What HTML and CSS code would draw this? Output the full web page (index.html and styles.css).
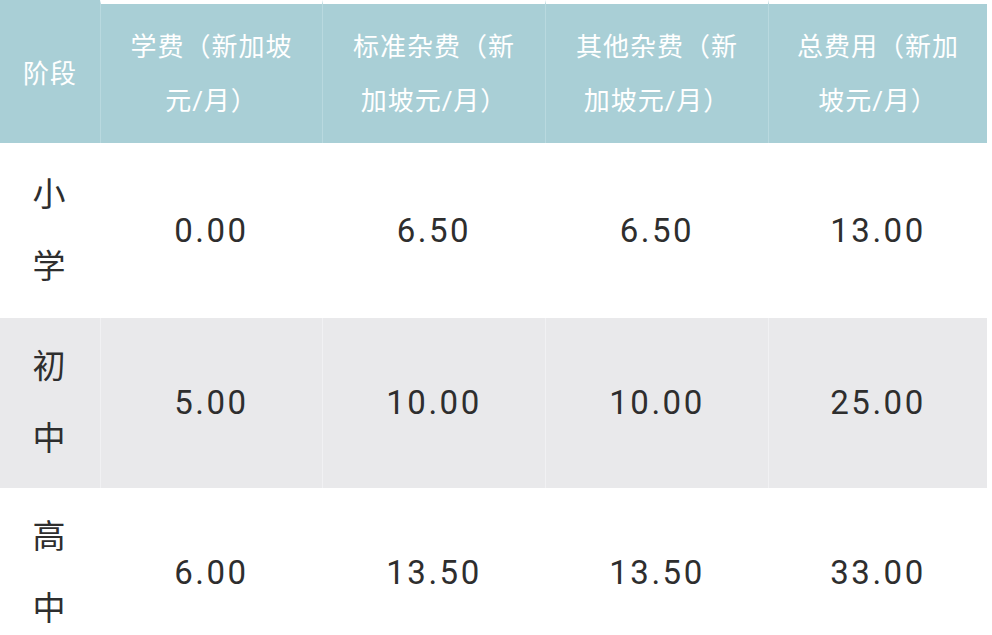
FILE: index.html
```html
<!DOCTYPE html>
<html lang="zh-CN">
<head>
<meta charset="utf-8">
<title>学费</title>
<link rel="stylesheet" href="styles.css">
</head>
<body>
<table class="fees">
  <colgroup>
    <col class="c-stage">
    <col class="c-a">
    <col class="c-b">
    <col class="c-c">
    <col class="c-d">
  </colgroup>
  <thead>
    <tr>
      <th class="stage-h">阶段</th>
      <th>学费（新加坡元/月）</th>
      <th>标准杂费（新加坡元/月）</th>
      <th>其他杂费（新加坡元/月）</th>
      <th>总费用（新加坡元/月）</th>
    </tr>
  </thead>
  <tbody>
    <tr class="first">
      <td class="stage">小学</td>
      <td>0.00</td>
      <td>6.50</td>
      <td>6.50</td>
      <td>13.00</td>
    </tr>
    <tr class="alt">
      <td class="stage">初中</td>
      <td>5.00</td>
      <td>10.00</td>
      <td>10.00</td>
      <td>25.00</td>
    </tr>
    <tr>
      <td class="stage">高中</td>
      <td>6.00</td>
      <td>13.50</td>
      <td>13.50</td>
      <td>33.00</td>
    </tr>
  </tbody>
</table>
</body>
</html>
```
FILE: styles.css
```css
html, body {
  margin: 0;
  padding: 0;
  background: #ffffff;
}

body {
  font-family: Roboto, "Noto Sans CJK SC", "Noto Sans", sans-serif;
  color: #333333;
}

.fees {
  width: 987px;
  table-layout: fixed;
  border-collapse: separate;
  border-spacing: 0;
}

.c-stage { width: 100px; }
.c-a { width: 222px; }
.c-b { width: 223px; }
.c-c { width: 223px; }
.c-d { width: 219px; }

.fees th {
  background: #a9cfd6;
  color: #ffffff;
  font-weight: 400;
  font-size: 26px;
  line-height: 54px;
  letter-spacing: 1px;
  padding: 16px 20px 15px;
  text-align: center;
  vertical-align: middle;
  border-left: 1px solid #b9d9df;
  border-top: 4px solid #ffffff;
}

.fees th.stage-h {
  border-left: none;
  border-top: none;
  padding-top: 20px;
}

.fees td {
  font-size: 33px;
  line-height: 72px;
  letter-spacing: 2.5px;
  padding: 13px 20px;
  text-align: center;
  vertical-align: middle;
  border-left: 1px solid transparent;
  color: #2e2e2e;
}

.fees td.stage {
  border-left: none;
  letter-spacing: 2px;
}

.fees tr.first td {
  padding-top: 16px;
  padding-bottom: 15px;
}

.fees tr.alt td {
  background: #e9e9eb;
}

.fees tr.alt td + td {
  border-left-color: #f1f1f3;
}
```
